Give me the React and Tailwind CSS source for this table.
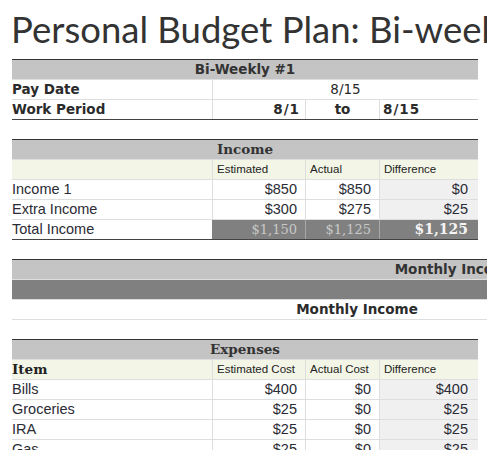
import React from "react";

const sans = "font-['Liberation_Sans',Arial,sans-serif]";
const bold = "font-['DejaVu_Sans',Verdana,sans-serif] font-bold text-[13.5px]";
const serifBold = "font-['DejaVu_Serif',Georgia,serif] font-bold";

const incomeRows = [
  { name: "Income 1", est: "$850", act: "$850", diff: "$0" },
  { name: "Extra Income", est: "$300", act: "$275", diff: "$25" },
];

const expenseRows = [
  { name: "Bills", est: "$400", act: "$0", diff: "$400" },
  { name: "Groceries", est: "$25", act: "$0", diff: "$25" },
  { name: "IRA", est: "$25", act: "$0", diff: "$25" },
  { name: "Gas", est: "$25", act: "$0", diff: "$25" },
];

const cols = "grid grid-cols-[200px_93px_74px_99px]";
const row = "h-[20px] leading-[19px] border-b border-[#dedede]";
const cell = "border-l border-[#dedede]";

// grey band with a centred title
function SectionHeader({ children, className = "" }) {
  return (
    <div className={`${row} bg-[#c4c4c4] text-center text-[#333] ${className}`}>
      {children}
    </div>
  );
}

// light green row with column captions
function SubHeader({ first, labels }) {
  return (
    <div className={`${cols} ${row} bg-[#f3f6e6] text-[11.5px] text-[#222] ${sans}`}>
      <div className={`${serifBold} text-[13.5px] text-[#222]`}>{first}</div>
      {labels.map((l) => (
        <div key={l} className={`${cell} pl-[4px]`}>
          {l}
        </div>
      ))}
    </div>
  );
}

function MoneyRow({ r }) {
  return (
    <div className={`${cols} ${row} text-[14.5px] text-[#2b2b35] ${sans}`}>
      <div className="whitespace-nowrap">{r.name}</div>
      <div className={`${cell} text-right pr-[8px]`}>{r.est}</div>
      <div className={`${cell} text-right pr-[8px]`}>{r.act}</div>
      <div className={`${cell} text-right pr-[10px] bg-[#f0f0f0]`}>{r.diff}</div>
    </div>
  );
}

export default function App() {
  return (
    <div className="w-[487px] h-[450px] overflow-hidden bg-white">
      <h1 className="h-[59px] pt-[11px] pl-[11px] whitespace-nowrap font-['Lato',sans-serif] text-[36.5px] leading-[36px] text-[#333]">
        Personal Budget Plan: Bi-weekly
      </h1>

      <div className="pl-[12px]">
        {/* Bi-weekly */}
        <div className="w-[466px] border-t border-[#333]">
          <SectionHeader className={bold}>Bi-Weekly #1</SectionHeader>
          <div className={`${cols} ${row} ${bold} text-[#2b2b2b]`}>
            <div>Pay Date</div>
            <div className={`${cell} col-span-3 text-center font-normal`}>8/15</div>
          </div>
          <div className={`${cols} h-[20px] leading-[19px] border-b border-[#444] ${bold} text-[#2b2b2b]`}>
            <div>Work Period</div>
            <div className={`${cell} text-right pr-[5px] tracking-[1px]`}>8/1</div>
            <div className={`${cell} text-center`}>to</div>
            <div className={`${cell} pl-[3px] tracking-[1px]`}>8/15</div>
          </div>
        </div>

        {/* Income */}
        <div className="w-[466px] mt-[19px] border-t border-[#333]">
          <SectionHeader className={`${serifBold} text-[13.5px]`}>Income</SectionHeader>
          <SubHeader first="" labels={["Estimated", "Actual", "Difference"]} />
          {incomeRows.map((r) => (
            <MoneyRow key={r.name} r={r} />
          ))}
          <div className={`${cols} h-[20px] leading-[19px] border-b border-[#444] text-[#2b2b35]`}>
            <div className={`${sans} text-[14.5px]`}>Total Income</div>
            <div className="bg-[#808080] text-right pr-[8px] text-[#c8c8c8] font-['DejaVu_Serif',serif] text-[13px]">$1,150</div>
            <div className="bg-[#808080] border-l border-[#a8a8a8] text-right pr-[8px] text-[#c8c8c8] font-['DejaVu_Serif',serif] text-[13px]">$1,125</div>
            <div className={`bg-[#808080] border-l border-[#a8a8a8] text-right pr-[10px] text-[#f4f4f4] ${serifBold} text-[14px]`}>$1,125</div>
          </div>
        </div>

        {/* Monthly income */}
        <div className="w-[887px] mt-[19px] border-t border-[#333]">
          <SectionHeader className={bold}>Monthly Income</SectionHeader>
          <div className="h-[20px] border-b border-[#dedede] bg-[#808080]" />
          <div className={`grid grid-cols-[200px_290px_1fr] ${row} ${bold} text-[#2b2b2b]`}>
            <div />
            <div className="text-center">Monthly Income</div>
            <div />
          </div>
        </div>

        {/* Expenses */}
        <div className="w-[466px] mt-[19px] border-t border-[#333]">
          <SectionHeader className={`${serifBold} text-[13.5px]`}>Expenses</SectionHeader>
          <SubHeader first="Item" labels={["Estimated Cost", "Actual Cost", "Difference"]} />
          {expenseRows.map((r) => (
            <MoneyRow key={r.name} r={r} />
          ))}
        </div>
      </div>
    </div>
  );
}
